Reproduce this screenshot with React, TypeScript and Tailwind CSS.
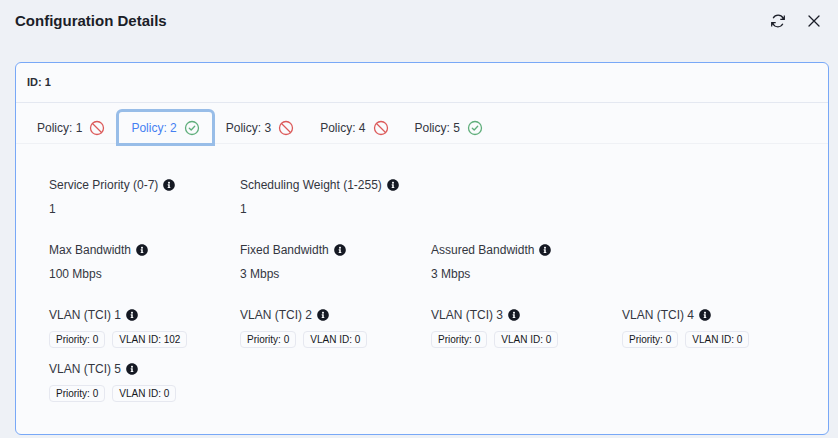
import React from 'react';
import { FaInfoCircle } from 'react-icons/fa';

type Field = { label: string; value: string };
type Vlan = { id: number; priority: number; vlanId: number };

const policies = [
  { id: 1, enabled: false },
  { id: 2, enabled: true },
  { id: 3, enabled: false },
  { id: 4, enabled: false },
  { id: 5, enabled: true },
];

const priorityFields: Field[] = [
  { label: 'Service Priority (0-7)', value: '1' },
  { label: 'Scheduling Weight (1-255)', value: '1' },
];

const bandwidthFields: Field[] = [
  { label: 'Max Bandwidth', value: '100 Mbps' },
  { label: 'Fixed Bandwidth', value: '3 Mbps' },
  { label: 'Assured Bandwidth', value: '3 Mbps' },
];

const vlans: Vlan[] = [
  { id: 1, priority: 0, vlanId: 102 },
  { id: 2, priority: 0, vlanId: 0 },
  { id: 3, priority: 0, vlanId: 0 },
  { id: 4, priority: 0, vlanId: 0 },
  { id: 5, priority: 0, vlanId: 0 },
];

const StatusIcon: React.FC<{ enabled: boolean }> = ({ enabled }) => (
  <svg
    viewBox="0 0 16 16"
    className={enabled ? 'size-4 text-[#5fae7b]' : 'size-4 text-[#dc5a5a]'}
    fill="none"
    stroke="currentColor"
    strokeWidth="1.3"
    strokeLinecap="round"
    strokeLinejoin="round"
    aria-hidden="true"
  >
    <circle cx="8" cy="8" r="6.5" />
    {enabled ? <path d="M5.3 8.2l1.9 1.8 3.5-3.8" /> : <path d="M3.5 3.5l9 9" />}
  </svg>
);

const RefreshIcon: React.FC = () => (
  <svg viewBox="0 0 16 16" className="size-4" fill="none" stroke="currentColor" strokeWidth="1.2" aria-hidden="true">
    <path d="M3.1 5.2C4.2 3.3 6 2.2 8.1 2.2c2.1 0 4 1.1 5 3" />
    <path d="M12.9 10.8c-1.1 1.9-2.9 3-5 3-2.1 0-4-1.1-5-3" />
    <path d="M14.3 2.4v4h-4M1.7 13.6v-4h4" />
    <path d="M14.3 3.4v3h-3zM1.7 12.6v-3h3z" fill="currentColor" stroke="none" />
  </svg>
);

const CloseIcon: React.FC = () => (
  <svg viewBox="0 0 16 16" className="size-4" fill="none" stroke="currentColor" strokeWidth="1.3" strokeLinecap="round" aria-hidden="true">
    <path d="M3 3l10 10M13 3L3 13" />
  </svg>
);

const FieldLabel: React.FC<{ text: string }> = ({ text }) => (
  <dt className="flex items-center gap-[5px] whitespace-nowrap leading-4">
    {text}
    <FaInfoCircle className="size-3 text-[#151923]" />
  </dt>
);

const FieldRow: React.FC<{ fields: Field[] }> = ({ fields }) => (
  <dl className="grid grid-cols-4 gap-x-[18px]">
    {fields.map((field) => (
      <div key={field.label}>
        <FieldLabel text={field.label} />
        <dd className="mt-2 leading-4">{field.value}</dd>
      </div>
    ))}
  </dl>
);

const Tag: React.FC<{ children: React.ReactNode }> = ({ children }) => (
  <span className="whitespace-nowrap rounded border border-[#e6e8f0] px-1.5 text-[10px] leading-[15px] text-[#15171c]">
    {children}
  </span>
);

const App: React.FC = () => {
  return (
    <div className="min-h-screen bg-[#eef1f6] font-['Liberation_Sans',Arial,sans-serif] text-xs text-[#33363f]">
      {/* Header */}
      <header className="flex items-center justify-between pl-[15px] pr-4 pt-[9px] text-[#1b1e28]">
        <h1 className="text-[15px] font-bold leading-6">Configuration Details</h1>
        <div className="flex items-center gap-5">
          <button type="button" aria-label="Refresh">
            <RefreshIcon />
          </button>
          <button type="button" aria-label="Close">
            <CloseIcon />
          </button>
        </div>
      </header>

      {/* Policy card */}
      <main className="pb-[3px] pl-[15px] pr-[9px] pt-[29px]">
        <section className="rounded-md border border-[#78a8f7] bg-[#fafbfd]">
          <h2 className="border-b border-[#e4e8f1] px-[11px] py-3 text-[11px] font-bold leading-[15px] text-[#2a2d36]">ID: 1</h2>

          <div role="tablist" className="flex border-b border-[#eff1f5] pl-2 pt-1.5">
            {policies.map((policy) => (
              <button
                key={policy.id}
                type="button"
                role="tab"
                aria-selected={policy.id === 2}
                className={
                  policy.id === 2
                    ? '-mx-0.5 -mb-[3px] flex h-[37px] items-center gap-[7px] rounded-t-md border-[3px] border-[#98bde8] bg-[#fafbfd] px-3 text-[#4580f2]'
                    : '-mb-[3px] flex h-[37px] items-center gap-[7px] px-[13px]'
                }
              >
                Policy: {policy.id}
                <StatusIcon enabled={policy.enabled} />
              </button>
            ))}
          </div>

          <div className="flex flex-col gap-[25px] px-[33px] pb-8 pt-[33px]">
            <FieldRow fields={priorityFields} />
            <FieldRow fields={bandwidthFields} />
            <dl className="grid grid-cols-4 gap-x-[18px] gap-y-[13px]">
              {vlans.map((vlan) => (
                <div key={vlan.id}>
                  <FieldLabel text={`VLAN (TCI) ${vlan.id}`} />
                  <dd className="mt-2 flex gap-[7px]">
                    <Tag>Priority: {vlan.priority}</Tag>
                    <Tag>VLAN ID: {vlan.vlanId}</Tag>
                  </dd>
                </div>
              ))}
            </dl>
          </div>
        </section>
      </main>
    </div>
  );
};

export default App;
